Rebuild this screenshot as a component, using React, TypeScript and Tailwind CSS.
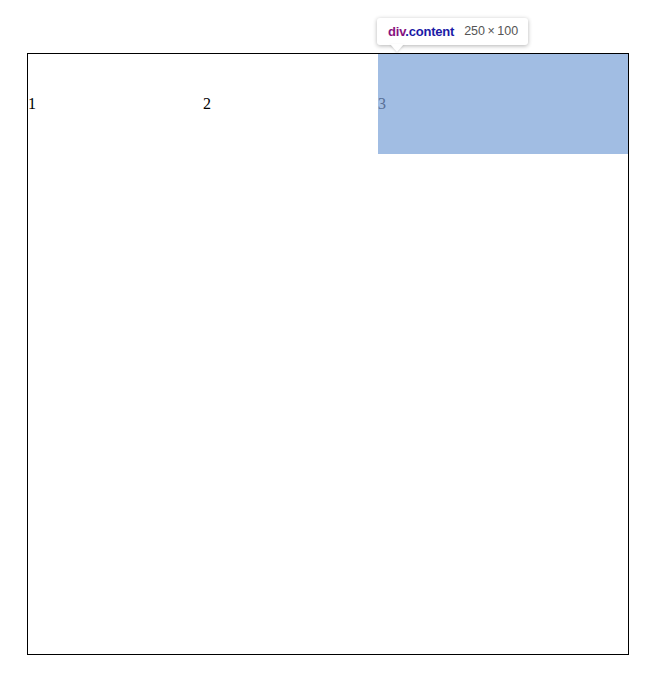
export default function App() {
  const items = ["1", "2", "3"];

  return (
    <main className="relative min-h-screen bg-white pl-[27px] pt-[53px] font-['Liberation_Serif',serif] text-black">
      <div className="flex h-[602px] w-[602px] border border-black">
        {items.map((item, index) => (
          <div key={item} className="h-[100px] w-[175px] shrink-0">
            <div
              className={
                index === 2
                  ? "flex h-[100px] w-[250px] items-center bg-[#a1bde3] text-[16px] text-[#596f96]"
                  : "flex h-[100px] w-[250px] items-center text-[16px]"
              }
            >
              {item}
            </div>
          </div>
        ))}
      </div>

      {/* devtools inspect tooltip */}
      <div className="absolute left-[377px] top-[18px] flex h-[27px] w-[151px] items-center gap-[10px] rounded-[3px] bg-white pl-[11px] font-['Liberation_Sans',sans-serif] text-[13px] shadow-[0_1px_4px_rgba(0,0,0,0.3)]">
        <span className="font-bold tracking-[-0.2px]">
          <span className="text-[#881280]">div</span>
          <span className="text-[#1a1aa6]">.content</span>
        </span>
        <span className="text-[12.5px] text-[#555]">250{"\u2009×\u2009"}100</span>
        <div className="absolute left-[13px] top-[26px] h-0 w-0 border-x-[7px] border-t-[8px] border-x-transparent border-t-white drop-shadow-[0_1px_1px_rgba(0,0,0,0.15)]" />
      </div>
    </main>
  );
}
